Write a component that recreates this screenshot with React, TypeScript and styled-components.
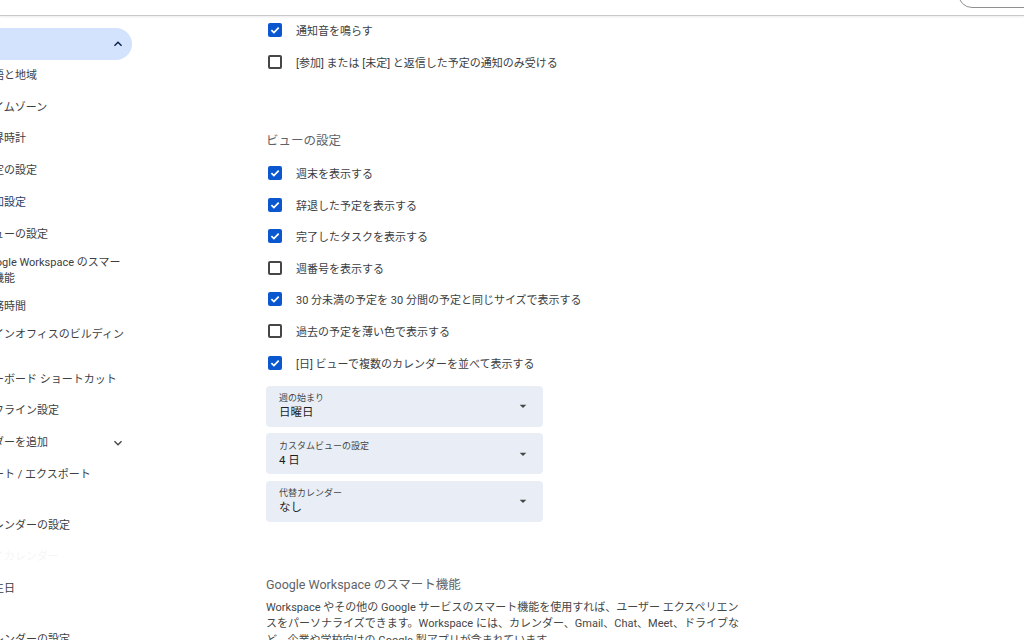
import styled, { createGlobalStyle } from 'styled-components';

const GlobalStyle = createGlobalStyle`
  html, body {
    margin: 0;
    padding: 0;
    background: #fff;
  }
  body {
    font-family: Roboto, "Noto Sans CJK JP", sans-serif;
    color: #3c4043;
    overflow: hidden;
  }
  * {
    box-sizing: border-box;
  }
`;

type NavEntry = {
  label: string;
  depth: 'top' | 'sub';
  selected?: boolean;
  current?: boolean;
  faint?: boolean;
  gap?: boolean;
  chevron?: 'up' | 'down';
};

const navItems: NavEntry[] = [
  { label: '全般', depth: 'top', selected: true, chevron: 'up' },
  { label: '言語と地域', depth: 'sub' },
  { label: 'タイムゾーン', depth: 'sub' },
  { label: '世界時計', depth: 'sub' },
  { label: '予定の設定', depth: 'sub' },
  { label: '通知設定', depth: 'sub', current: true },
  { label: 'ビューの設定', depth: 'sub' },
  { label: 'Google Workspace のスマート機能', depth: 'sub' },
  { label: '勤務時間', depth: 'sub' },
  { label: 'メインオフィスのビルディング', depth: 'sub' },
  { label: 'キーボード ショートカット', depth: 'sub' },
  { label: 'オフライン設定', depth: 'sub' },
  { label: 'カレンダーを追加', depth: 'top', chevron: 'down' },
  { label: 'インポート / エクスポート', depth: 'top' },
  { label: 'マイカレンダーの設定', depth: 'top', gap: true },
  { label: 'マイカレンダー', depth: 'sub', faint: true },
  { label: '誕生日', depth: 'sub' },
  { label: '他のカレンダーの設定', depth: 'top', gap: true },
];

const notifyOptions = [
  { label: '通知音を鳴らす', checked: true },
  { label: '[参加] または [未定] と返信した予定の通知のみ受ける', checked: false },
];

const viewOptions = [
  { label: '週末を表示する', checked: true },
  { label: '辞退した予定を表示する', checked: true },
  { label: '完了したタスクを表示する', checked: true },
  { label: '週番号を表示する', checked: false },
  { label: '30 分未満の予定を 30 分間の予定と同じサイズで表示する', checked: true },
  { label: '過去の予定を薄い色で表示する', checked: false },
  { label: '[日] ビューで複数のカレンダーを並べて表示する', checked: true },
];

const viewSelects = [
  { label: '週の始まり', value: '日曜日' },
  { label: 'カスタムビューの設定', value: '4 日' },
  { label: '代替カレンダー', value: 'なし' },
];

function ChevronIcon({ dir }: { dir: 'up' | 'down' }) {
  return (
    <svg width="16" height="16" viewBox="0 0 24 24">
      <path
        fill="currentColor"
        d={
          dir === 'up'
            ? 'M12 8l-6 6 1.41 1.41L12 10.83l4.59 4.58L18 14z'
            : 'M16.59 8.59L12 13.17 7.41 8.59 6 10l6 6 6-6z'
        }
      />
    </svg>
  );
}

function Checkbox({ checked }: { checked: boolean }) {
  return (
    <Box $checked={checked}>
      {checked && (
        <svg width="14" height="14" viewBox="0 0 14 14">
          <path d="M3.4 7.2 L5.9 9.6 L10.7 4.6" fill="none" stroke="#fff" strokeWidth="1.7" />
        </svg>
      )}
    </Box>
  );
}

export default function App() {
  return (
    <>
      <GlobalStyle />
      <Page>
        <TopBar>
          <AccountChip />
        </TopBar>
        <Body>
          <Sidebar>
            {navItems.map((item, index) => (
              <NavItem
                key={index}
                $depth={item.depth}
                $selected={item.selected}
                $current={item.current}
                $faint={item.faint}
                $gap={item.gap}
              >
                <NavLabel>{item.label}</NavLabel>
                {item.chevron && (
                  <NavChevron $selected={item.selected}>
                    <ChevronIcon dir={item.chevron} />
                  </NavChevron>
                )}
              </NavItem>
            ))}
          </Sidebar>

          <Main>
            <OptionList $offset={-1.8}>
              {notifyOptions.map((opt, index) => (
                <OptionRow key={index}>
                  <Checkbox checked={opt.checked} />
                  <span>{opt.label}</span>
                </OptionRow>
              ))}
            </OptionList>

            <SectionTitle $top={53.6} $bottom={6.2}>
              ビューの設定
            </SectionTitle>
            <OptionList>
              {viewOptions.map((opt, index) => (
                <OptionRow key={index}>
                  <Checkbox checked={opt.checked} />
                  <span>{opt.label}</span>
                </OptionRow>
              ))}
            </OptionList>

            <SelectStack>
              {viewSelects.map((sel, index) => (
                <SelectField key={index}>
                  <SelectText>
                    <SelectLabel>{sel.label}</SelectLabel>
                    <SelectValue>{sel.value}</SelectValue>
                  </SelectText>
                  <svg width="16" height="16" viewBox="0 0 24 24">
                    <path d="M7 10l5 5 5-5z" fill="#444746" />
                  </svg>
                </SelectField>
              ))}
            </SelectStack>

            <SectionTitle $top={53} $bottom={4.8}>
              Google Workspace のスマート機能
            </SectionTitle>
            <Description>
              Workspace やその他の Google サービスのスマート機能を使用すれば、ユーザー エクスペリエンスをパーソナライズできます。Workspace には、カレンダー、Gmail、Chat、Meet、ドライブなど、企業や学校向けの Google 製アプリが含まれています。
            </Description>
          </Main>
        </Body>
      </Page>
    </>
  );
}

const Page = styled.div`
  width: 1024px;
  height: 640px;
  overflow: hidden;
  display: flex;
  flex-direction: column;
  background: #fff;
`;

const TopBar = styled.header`
  height: 16px;
  flex-shrink: 0;
  display: flex;
  justify-content: flex-end;
  border-bottom: 1px solid #c9c9c9;
  box-shadow: 0 1px 2px rgba(0, 0, 0, 0.08);
  background: #fff;
  position: relative;
  z-index: 1;
`;

const AccountChip = styled.div`
  width: 90px;
  height: 28px;
  margin-top: -20px;
  margin-right: -24px;
  border: 1px solid #8e918f;
  border-radius: 14px;
`;

const Body = styled.div`
  flex: 1;
  min-height: 0;
  display: flex;
`;

const Sidebar = styled.nav`
  width: 256px;
  margin-left: -124px;
  flex-shrink: 0;
  padding-top: 12px;
  display: flex;
  flex-direction: column;
`;

const NavItem = styled.div<{
  $depth: 'top' | 'sub';
  $selected?: boolean;
  $current?: boolean;
  $faint?: boolean;
  $gap?: boolean;
}>`
  flex-shrink: 0;
  display: flex;
  align-items: center;
  min-height: ${(p) => (p.$selected ? 32 : 31.8)}px;
  padding: 4.3px 4px 4.3px ${(p) => (p.$depth === 'top' ? 84 : 106)}px;
  margin-top: ${(p) => (p.$gap ? 18.8 : 0)}px;
  font-size: 11px;
  line-height: 16px;
  color: ${(p) => (p.$faint ? '#f6f6f6' : p.$current ? '#283c63' : '#3c4043')};
  background: ${(p) => (p.$selected ? '#d3e3fd' : 'transparent')};
  border-radius: ${(p) => (p.$selected ? '16px' : '0')};
`;

const NavLabel = styled.span`
  flex: 1;
  min-width: 0;
`;

const NavChevron = styled.span<{ $selected?: boolean }>`
  display: flex;
  margin-right: 2px;
  color: ${(p) => (p.$selected ? '#041e49' : '#444746')};
`;

const Main = styled.main`
  flex: 1;
  padding-left: 134px;
  display: flex;
  flex-direction: column;
  align-items: flex-start;

  & > * {
    flex-shrink: 0;
  }
`;

const OptionList = styled.div<{ $offset?: number }>`
  display: flex;
  flex-direction: column;
  margin-top: ${(p) => p.$offset ?? 0}px;
`;

const OptionRow = styled.label`
  height: 31.6px;
  flex-shrink: 0;
  display: flex;
  align-items: center;
  gap: 14px;
  padding-left: 2px;
  font-size: 11px;
  color: #3c4043;
  white-space: nowrap;
`;

const Box = styled.span<{ $checked: boolean }>`
  width: 14px;
  height: 14px;
  flex-shrink: 0;
  display: flex;
  align-items: center;
  justify-content: center;
  border-radius: 2px;
  background: ${(p) => (p.$checked ? '#0b57d0' : '#fff')};
  border: ${(p) => (p.$checked ? 'none' : '2px solid #444746')};
`;

const SectionTitle = styled.h2<{ $top: number; $bottom: number }>`
  margin: ${(p) => p.$top}px 0 ${(p) => p.$bottom}px;
  font-size: 12.5px;
  line-height: 20px;
  font-weight: 400;
  color: #5f6368;
`;

const SelectStack = styled.div`
  display: flex;
  flex-direction: column;
  gap: 6.5px;
  margin-top: 7.6px;
`;

const SelectField = styled.div`
  width: 277px;
  height: 41px;
  flex-shrink: 0;
  display: flex;
  align-items: center;
  justify-content: space-between;
  padding: 0 12px 0 13px;
  background: #e9eef6;
  border-radius: 4px;
`;

const SelectText = styled.div`
  display: flex;
  flex-direction: column;
`;

const SelectLabel = styled.span`
  font-size: 9px;
  line-height: 12px;
  color: #444746;
`;

const SelectValue = styled.span`
  font-size: 11.5px;
  line-height: 16px;
  color: #1f1f1f;
`;

const Description = styled.p`
  margin: 0;
  width: 480px;
  font-size: 11px;
  line-height: 16.5px;
  color: #444746;
`;
